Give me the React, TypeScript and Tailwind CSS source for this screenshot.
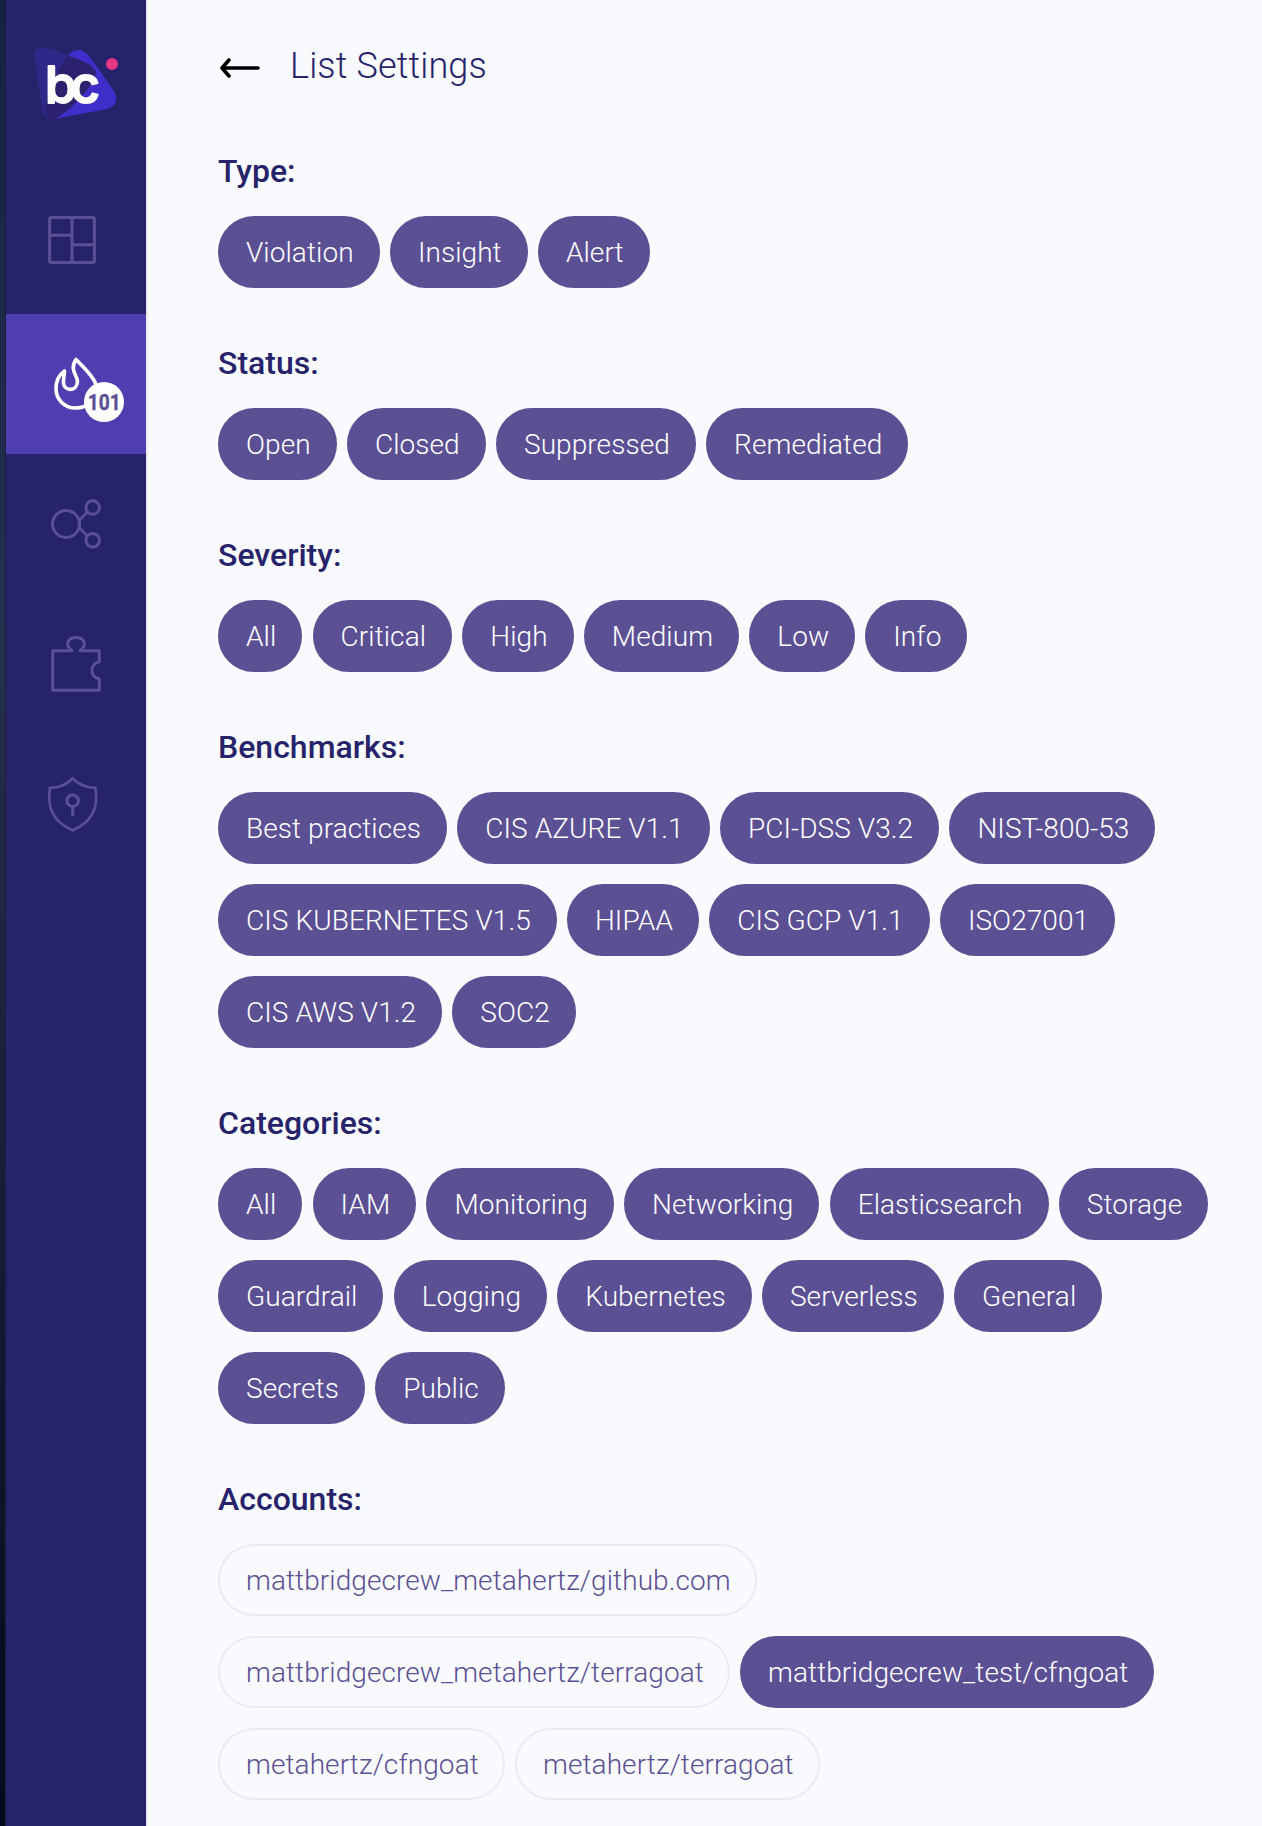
import type { ReactNode } from "react";

type Section = { title: string; items: string[]; selected?: string[] };

const sections: Section[] = [
  { title: "Type:", items: ["Violation", "Insight", "Alert"] },
  { title: "Status:", items: ["Open", "Closed", "Suppressed", "Remediated"] },
  { title: "Severity:", items: ["All", "Critical", "High", "Medium", "Low", "Info"] },
  {
    title: "Benchmarks:",
    items: [
      "Best practices", "CIS AZURE V1.1", "PCI-DSS V3.2", "NIST-800-53",
      "CIS KUBERNETES V1.5", "HIPAA", "CIS GCP V1.1", "ISO27001",
      "CIS AWS V1.2", "SOC2",
    ],
  },
  {
    title: "Categories:",
    items: [
      "All", "IAM", "Monitoring", "Networking", "Elasticsearch", "Storage",
      "Guardrail", "Logging", "Kubernetes", "Serverless", "General",
      "Secrets", "Public",
    ],
  },
  {
    title: "Accounts:",
    items: [
      "mattbridgecrew_metahertz/github.com",
      "mattbridgecrew_metahertz/terragoat",
      "mattbridgecrew_test/cfngoat",
      "metahertz/cfngoat",
      "metahertz/terragoat",
    ],
    selected: ["mattbridgecrew_test/cfngoat"],
  },
];

function Chip({ label, on }: { label: string; on: boolean }) {
  return (
    <button
      className={
        "flex h-[72px] items-center whitespace-nowrap rounded-full border-2 pt-0.5 pl-[26px] pr-6 text-[28px] font-light leading-none tracking-[0.08px] " +
        (on
          ? "border-[#5c5094] bg-[#5c5094] text-white"
          : "border-[#ebecf0] bg-transparent text-[#5c5094]")
      }
    >
      {label}
    </button>
  );
}

function NavItem({ active, children }: { active?: boolean; children: ReactNode }) {
  return (
    <a className={"block size-[140px] " + (active ? "bg-[#4f3eb0] text-white" : "text-[#5c5094]")}>
      <svg
        viewBox="0 0 140 140"
        className="size-full"
        fill="none"
        stroke="currentColor"
        strokeWidth="3"
        strokeLinejoin="round"
        strokeLinecap="round"
      >
        {children}
      </svg>
    </a>
  );
}

function Logo() {
  return (
    <svg viewBox="0 0 140 174" className="block h-[174px] w-[140px]">
      <path d="M28 54C28 49 33 47 40 48C47 49 55 52 62 55L66 60L50 118C42 121 38 117 36 110Z" fill="#302888" />
      <path d="M62 56C67 49 75 48 81 54C91 66 102 82 109 93C112 101 109 107 101 109L48 119C56 115 88 82 88 72C84 64 72 58 62 56Z" fill="#402ecb" />
      <path d="M61 56C74 60 88 64 90 72C90 84 62 114 48 119C41 120 39 115 40 106C42 88 52 70 61 56Z" fill="#2c216f" />
      <text
        x="39"
        y="103.2"
        letterSpacing="-6"
        fontFamily="Inter"
        fontWeight="500"
        fontSize="51"
        fill="white"
        stroke="white"
        strokeWidth="2"
        strokeLinejoin="round"
      >
        bc
      </text>
      <circle cx="106" cy="64" r="6" fill="#e23887" />
    </svg>
  );
}

function Sidebar() {
  return (
    <aside className="w-[142px] shrink-0 border-r-2 border-[#ebecf0] bg-[#27236a]">
      <Logo />
      <nav>
        <NavItem>
          <rect x="43.6" y="43.6" width="44.8" height="44.8" rx="2" />
          <path d="M66 44V88M44 61.3H66M66 70.7H88" />
        </NavItem>
        <NavItem active>
          <path
            strokeWidth="3.6"
            d="M70 45.5C75 51 88 62 90.5 72C93 85 82 94 69.5 94C58 94 50 85 50 74.5C50 67 53 61 58.5 57C58.5 61 57 65 57.5 69C58.5 78 71 77.5 71.5 67.5C71.5 61 63 56 70 45.5Z"
          />
          <circle cx="98" cy="88" r="20" fill="white" stroke="none" />
          <text
            x="98.3"
            y="95.8"
            textAnchor="middle"
            textLength="33"
            lengthAdjust="spacingAndGlyphs"
            fontFamily="Roboto"
            fontWeight="700"
            fontSize="22"
            fill="#5c5094"
            stroke="#5c5094"
            strokeWidth="0.4"
          >
            101
          </text>
        </NavItem>
        <NavItem>
          <circle cx="60" cy="70" r="13.5" />
          <circle cx="86.7" cy="53.5" r="6.8" />
          <circle cx="86.7" cy="86.3" r="6.8" />
          <path d="M73.5 66L81.5 58M73.5 74L81.5 82" />
        </NavItem>
        <NavItem>
          <path d="M46.7 56.7H66C58 51 62 43.5 70 43.5C78 43.5 82 51 74 56.7H93.3V67.7C83.5 70 83.5 82.5 93.3 85V96.3H46.7Z" />
        </NavItem>
        <NavItem>
          <path
            strokeWidth="2.6"
            strokeLinejoin="miter"
            d="M66.7 44.5C60 51 53 54 44 53.8C40.5 74 48 88.5 66.7 96.3C85.4 88.5 92.9 74 89.4 53.8C80.4 54 73.4 51 66.7 44.5Z"
          />
          <circle cx="66.7" cy="66.7" r="5.8" />
          <path d="M66.7 73V81" />
        </NavItem>
      </nav>
    </aside>
  );
}

export default function App() {
  return (
    <div className="flex h-[1826px] w-[1262px] overflow-hidden bg-[#f8fafe] font-['Roboto',sans-serif]">
      <div className="w-[6px] shrink-0 border-r border-[#1b1d3c] bg-linear-to-b from-[#142244] via-[#25304f] via-35% to-[#040b1c]" />
      <Sidebar />
      <main className="min-w-0 flex-1 pl-[70px] pr-8">
        <header className="flex h-[132px] items-center">
          <svg
            viewBox="0 0 44 24"
            className="mt-1 h-6 w-11"
            fill="none"
            stroke="black"
            strokeWidth="3.6"
            strokeLinecap="round"
            strokeLinejoin="round"
          >
            <path d="M40 12H4M11 4L4 12L11 20" />
          </svg>
          <h1 className="ml-7 text-[36px] font-light leading-none tracking-[0.15px] text-[#27236a]">
            List Settings
          </h1>
        </header>
        <div className="mt-[19px] flex flex-col gap-[55px]">
          {sections.map((s) => (
            <section key={s.title}>
              <h2 className="text-[32px] font-medium leading-[40px] text-[#27236a]">{s.title}</h2>
              <div className="mt-[25px] flex flex-wrap gap-x-[10.2px] gap-y-5">
                {s.items.map((item) => (
                  <Chip key={item} label={item} on={!s.selected || s.selected.includes(item)} />
                ))}
              </div>
            </section>
          ))}
        </div>
      </main>
    </div>
  );
}
